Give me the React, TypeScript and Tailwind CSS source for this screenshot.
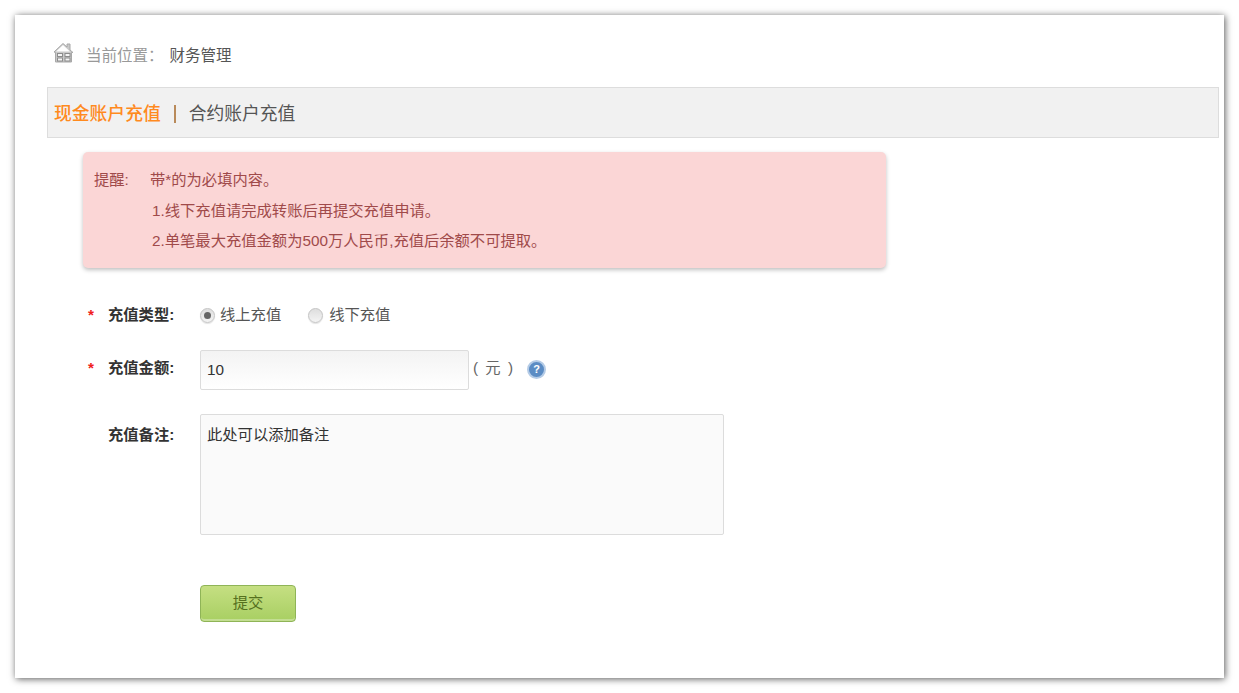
function HouseIcon() {
  return (
    <svg width="21" height="21" viewBox="0 0 21 21" className="shrink-0">
      <path d="M1 10 L10 1.5 L14 5 L14 2 L17 2 L17 8 L20 10.5 L18.5 10.5 L18.5 20 L2.5 20 L2.5 10.5 Z" fill="#c9c9c9" stroke="#a8a8a8" strokeWidth="1" />
      <path d="M3 9.5 L10 3 L17 9.5 Z" fill="#ffffff" />
      <rect x="4.5" y="11.5" width="5" height="3" fill="#f4f4f4" stroke="#8c8c8c" />
      <rect x="12" y="11.5" width="5" height="3" fill="#f4f4f4" stroke="#8c8c8c" />
      <rect x="4.5" y="16" width="5" height="3" fill="#f4f4f4" stroke="#8c8c8c" />
      <rect x="12" y="16" width="5" height="3" fill="#f4f4f4" stroke="#8c8c8c" />
    </svg>
  );
}

function Radio({ checked, label, wide }: { checked?: boolean; label: string; wide?: boolean }) {
  return (
    <div className={wide ? "flex items-center gap-[6px]" : "flex items-center gap-[5px]"}>
      <span className="flex h-[15px] w-[15px] items-center justify-center rounded-full border border-[#c4c4c4] bg-linear-to-b from-[#dedede] to-[#f4f4f4] shadow-[0_1px_1px_rgba(0,0,0,0.12)]">
        {checked && <span className="h-[7px] w-[7px] rounded-full bg-[#666666]" />}
      </span>
      <span>{label}</span>
    </div>
  );
}

function FormLabel({ required, children }: { required?: boolean; children: React.ReactNode }) {
  return (
    <div className="flex w-[117px] shrink-0 items-center">
      <span className="w-[25px] pl-[5px] font-bold text-[#f02020]">{required ? "*" : ""}</span>
      <span className="font-bold text-[#333333]">{children}</span>
    </div>
  );
}

export default function App() {
  return (
    <div
      className="h-[693px] overflow-hidden bg-white p-[15px] text-[15.3px] text-[#555555]"
      style={{ fontFamily: '"Liberation Sans", "Noto Sans CJK SC", sans-serif' }}
    >
      <div className="h-[663px] bg-white pl-[32px] pr-[5px] shadow-[1px_1px_7px_rgba(0,0,0,0.65)]">
        {/* Breadcrumb */}
        <div className="flex h-[72px] items-start pl-[6px] pt-[27px]">
          <HouseIcon />
          <span className="ml-[12px] mt-[2px] text-[15.5px] leading-[24px] text-[#999999]">当前位置：</span>
          <span className="ml-[6px] mt-[2px] text-[15.5px] leading-[24px] text-[#555555]">财务管理</span>
        </div>

        {/* Tabs */}
        <div className="flex h-[51px] items-center border border-[#dddddd] bg-[#f1f1f1] pl-[6px] pt-[3px] text-[17.8px]">
          <span className="font-medium text-[#ff8a1e]">现金账户充值</span>
          <span className="ml-[13px] mr-[13px] h-[18px] w-[2px] bg-[#b98a5a]" />
          <span className="text-[#555555]">合约账户充值</span>
        </div>

        {/* Notice */}
        <div className="ml-[36px] mt-[14px] flex h-[116px] w-[803px] rounded-[5px] bg-[#fbd6d6] pl-[11px] pt-[13px] text-[#a04a4a] shadow-[0_2px_4px_rgba(0,0,0,0.25)]">
          <div className="w-[56px] leading-[30.5px]">提醒:</div>
          <div className="leading-[30.5px]">
            <div>带*的为必填内容。</div>
            <div className="pl-[2px]">1.线下充值请完成转账后再提交充值申请。</div>
            <div className="pl-[2px]">2.单笔最大充值金额为500万人民币,充值后余额不可提取。</div>
          </div>
        </div>

        {/* Form */}
        <div className="ml-[36px]">
          <div className="mt-[35px] flex h-[24px] items-center">
            <FormLabel required>充值类型:</FormLabel>
            <Radio checked label="线上充值" />
            <div className="ml-[27px]">
              <Radio wide label="线下充值" />
            </div>
          </div>

          <div className="mt-[23px] flex items-center">
            <div className="pb-[3px]">
              <FormLabel required>充值金额:</FormLabel>
            </div>
            <div className="flex h-[40px] w-[269px] items-center rounded-[2px] border border-[#dcdcdc] bg-linear-to-b from-[#f3f3f3] to-white pl-[6px] text-[#333333]">
              10
            </div>
            <span className="ml-[4px] flex w-[40px] justify-between pb-[3px] text-[#666666]">
              <span>(</span>
              <span>元</span>
              <span>)</span>
            </span>
            <span className="ml-[14px] mb-[1px] flex h-[19px] w-[19px] items-center justify-center rounded-full border-2 border-[#b4cbe6] bg-[#5b8cc4] text-[11px] font-bold leading-none text-white">
              ?
            </span>
          </div>

          <div className="mt-[24px] flex items-start">
            <div className="pt-[10px]">
              <FormLabel>充值备注:</FormLabel>
            </div>
            <div className="h-[121px] w-[524px] rounded-[2px] border border-[#dcdcdc] bg-[#fafafa] pl-[6px] pt-[9px] text-[#333333]">
              此处可以添加备注
            </div>
          </div>

          <div className="ml-[117px] mt-[50px]">
            <button className="h-[37px] w-[96px] rounded-[4px] border border-[#8fb457] bg-linear-to-b from-[#c5df82] to-[#a8cf62] text-[#55701f] shadow-[inset_0_-2px_0_rgba(255,255,255,0.3)]">
              提交
            </button>
          </div>
        </div>
      </div>
    </div>
  );
}
